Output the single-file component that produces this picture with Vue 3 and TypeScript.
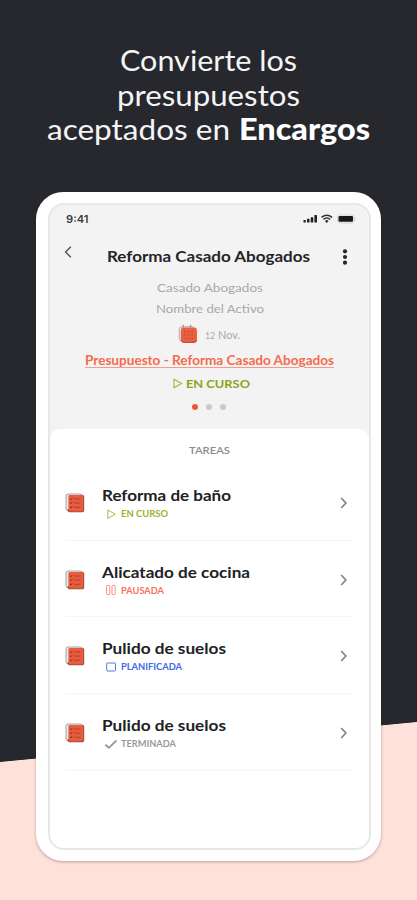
<script setup lang="ts">
type State = 'running' | 'paused' | 'planned' | 'done'

interface Task {
  title: string
  width: number
  state: State
  label: string
  labelWidth: number
}

const tasks: Task[] = [
  { title: 'Reforma de baño', width: 129, state: 'running', label: 'EN CURSO', labelWidth: 47 },
  { title: 'Alicatado de cocina', width: 148, state: 'paused', label: 'PAUSADA', labelWidth: 43 },
  { title: 'Pulido de suelos', width: 124, state: 'planned', label: 'PLANIFICADA', labelWidth: 61 },
  { title: 'Pulido de suelos', width: 124, state: 'done', label: 'TERMINADA', labelWidth: 55 },
]

// Widens the letters of a single line of text so that it fills the given width.
const vFit = {
  mounted(el: HTMLElement, binding: { value: number }) {
    const natural = el.getBoundingClientRect().width
    el.style.width = `${binding.value}px`
    el.style.transform = `scaleX(${binding.value / natural})`
  },
}
</script>

<template>
  <main class="poster">
    <h1 class="headline">
      <span class="line"><span v-fit="177" class="fit">Convierte los</span></span>
      <span class="line"><span v-fit="183" class="fit">presupuestos</span></span>
      <span class="line"><span v-fit="183" class="fit">aceptados en</span><b v-fit="131" class="fit strong">Encargos</b></span>
    </h1>

    <section class="phone">
      <div class="screen">
        <header class="head">
          <div class="status">
            <span v-fit="22.5" class="fit clock">9:41</span>
            <svg class="signals" width="54" height="12" viewBox="0 0 54 12">
              <g fill="#202124">
                <rect x="0.5" y="7" width="2.3" height="2.5" rx=".6" />
                <rect x="4" y="5.8" width="2.5" height="3.7" rx=".6" />
                <rect x="7.7" y="4.2" width="2.6" height="5.3" rx=".6" />
                <rect x="11.4" y="2" width="2.6" height="7.5" rx=".6" />
              </g>
              <g fill="none" stroke="#333436" stroke-width="1.5">
                <path d="M18.5 4.4Q23.8 0 29.1 4.4" />
                <path d="M20.4 6.4Q23.8 3.6 27.2 6.4" />
              </g>
              <path d="M21.9 7.9Q23.8 6.3 25.7 7.9L23.8 9.9Z" fill="#333436" />
              <rect x="34.5" y="2" width="16.5" height="8" rx="2" fill="none" stroke="#ccc" stroke-width=".8" />
              <rect x="35.5" y="3" width="14.5" height="5.8" rx="1" fill="#17181a" />
              <path d="M52 4.6v2.5" stroke="#ccc" />
            </svg>
          </div>
          <div class="bar">
            <svg class="back" width="10" height="14" viewBox="0 0 10 14">
              <path d="M7.8 1.8L2.6 7L7.8 12.2" fill="none" stroke="#4c4d4f" stroke-width="1.3" />
            </svg>
            <h2 v-fit="203" class="fit title">Reforma Casado Abogados</h2>
            <svg class="more" width="6" height="18" viewBox="0 0 6 18" fill="#242527">
              <circle cx="3" cy="3.3" r="2.1" />
              <circle cx="3" cy="9" r="2.1" />
              <circle cx="3" cy="14.7" r="2.1" />
            </svg>
          </div>
          <p class="meta"><span v-fit="106" class="fit">Casado Abogados</span></p>
          <p class="meta"><span v-fit="108" class="fit">Nombre del Activo</span></p>
          <div class="date">
            <svg width="20" height="20" viewBox="0 0 20 20">
              <rect x="1.2" y="2.7" width="15.5" height="14.5" rx="3" fill="#f4f4f4" stroke="#b1aaa8" />
              <path d="M5.3.8v3M12.7.8v3" stroke="#999" stroke-width="1.2" />
              <rect x="2.7" y="3.5" width="16.3" height="15.3" rx="3.2" fill="#ec6041" />
              <path d="M3.5 16.5Q4.2 18.2 6 18.3H16Q18.3 18.1 18.5 16" fill="none" stroke="#b54831" />
              <path d="M6 7.7h10M6 11h10M6 14.3h10" stroke="#b04a34" stroke-width="1.1" stroke-dasharray="1.8 1.8" />
            </svg>
            <span v-fit="35" class="fit day"><small>12</small> Nov.</span>
          </div>
          <p class="link-row"><a v-fit="249" class="fit link">Presupuesto - Reforma Casado Abogados</a></p>
          <div class="current">
            <svg width="10" height="11" viewBox="0 0 10 11">
              <path d="M1 1.3L8.5 5.5L1 9.7Z" fill="none" stroke="#9cb83c" stroke-width="1.1" />
            </svg>
            <span v-fit="64" class="fit">EN CURSO</span>
          </div>
          <div class="dots"><i class="on" /><i /><i /></div>
        </header>

        <div class="sheet">
          <h3 class="section"><span v-fit="41" class="fit">TAREAS</span></h3>
          <ul class="tasks">
            <li v-for="(task, i) in tasks" :key="i" class="task">
              <svg class="book" width="20" height="20" viewBox="0 0 20 20">
                <rect x="1" y="1" width="16" height="16.5" rx="2" fill="#e8e8e8" stroke="#aaa3a0" />
                <path d="M2 17.5L4 19.2H18L19.2 18V3L17.5 1.5" fill="#8d4938" />
                <rect x="3.4" y="2" width="15" height="16.4" rx="1.4" fill="#e95c3e" />
                <path d="M9 6h6.5M9 10h6.5M9 14.2h6.5" stroke="#a8442f" stroke-width="1.1" />
                <path d="M5 5.8l1 1 1.4-2M5 9.8l1 1 1.4-2M5 14l1 1 1.4-2" fill="none" stroke="#8a3222" stroke-width="1" />
              </svg>
              <div class="text">
                <div class="name"><span v-fit="task.width" class="fit">{{ task.title }}</span></div>
                <div class="state" :class="task.state">
                  <svg width="14" height="12" viewBox="0 0 14 12" fill="none" stroke="currentColor">
                    <path v-if="task.state === 'running'" d="M2.8 2L10.3 6.2L2.8 10.4Z" stroke-width=".9" />
                    <g v-else-if="task.state === 'paused'" stroke-width=".8">
                      <rect x="1.6" y="1.4" width="3.2" height="9.2" rx=".8" />
                      <rect x="7" y="1.4" width="3.2" height="9.2" rx=".8" />
                    </g>
                    <rect v-else-if="task.state === 'planned'" x="1.7" y="2" width="8.8" height="8" rx=".6" stroke-width=".9" />
                    <path v-else d="M.4 6.8L3.9 9.8L11.4 2.5" stroke-width="1.8" />
                  </svg>
                  <span v-fit="task.labelWidth" class="fit">{{ task.label }}</span>
                </div>
              </div>
              <svg class="chevron" width="10" height="14" viewBox="0 0 10 14">
                <path d="M2.2 2L6.9 7L2.2 12" fill="none" stroke="#808080" stroke-width="1.6" />
              </svg>
            </li>
          </ul>
        </div>
      </div>
    </section>
  </main>
</template>

<style>
body {
  margin: 0;
}
</style>

<style scoped>
.poster {
  box-sizing: border-box;
  width: 417px;
  height: 900px;
  padding-top: 43px;
  overflow: hidden;
  font-family: Lato, "Open Sans", sans-serif;
  background: linear-gradient(to bottom right, #27282d 0 49.5%, #ffe1db 50.5%) 0 722px / 417px 40px no-repeat,
    linear-gradient(#27282d 0 722px, #ffe1db 722px);
}
h1, h2, h3, p, ul {
  margin: 0;
  padding: 0;
  font-weight: inherit;
}
.fit {
  display: inline-block;
  white-space: nowrap;
  text-align: left;
  transform-origin: 0 50%;
}
.headline {
  height: 149px;
  color: #f5f5f5;
  font-size: 29.5px;
  line-height: 34.5px;
}
.line {
  display: flex;
  justify-content: center;
}
.strong {
  margin-left: 9px;
  color: #fff;
  font-weight: 900;
}
.phone {
  box-sizing: border-box;
  width: 345px;
  height: 669px;
  margin-left: 36px;
  padding: 11px 10px 11px 12px;
  border-radius: 27px;
  background: #fff;
  box-shadow: 0 1px 3px rgba(60, 25, 20, .35);
}
.screen {
  box-sizing: border-box;
  height: 647px;
  overflow: hidden;
  border: 2px solid #e7e7e7;
  border-radius: 16px;
  background: #f3f3f3;
}
.head {
  height: 224px;
}
.status {
  display: flex;
  justify-content: space-between;
  height: 28px;
  padding: 7px 12px 0 16px;
}
.clock {
  margin-top: 1px;
  color: #3d3e40;
  font-family: Inter, sans-serif;
  font-size: 10.5px;
  font-weight: 600;
  line-height: 14px;
}
.signals {
  margin-top: 1px;
}
.bar {
  display: flex;
  height: 37px;
  padding-left: 13px;
}
.back {
  margin-top: 5px;
}
.title {
  margin-left: 34px;
  margin-top: 6px;
  color: #242527;
  font-size: 16px;
  font-weight: 700;
  line-height: 20px;
}
.more {
  margin: 8px 21px 0 auto;
}
.meta {
  height: 21.3px;
  color: #a8a8a8;
  font-size: 12.3px;
  line-height: 22px;
  text-align: center;
}
.date {
  display: flex;
  height: 29px;
  padding-left: 128px;
}
.date svg {
  margin-top: 4px;
}
.day {
  margin-left: 7px;
  color: #a8a8a8;
  font-size: 10.5px;
  line-height: 30px;
}
.day small {
  font-size: 8.5px;
}
.link-row {
  height: 23px;
  text-align: center;
}
.link {
  color: #f36b4f;
  font-size: 12.3px;
  font-weight: 700;
  line-height: 23px;
  text-decoration: underline;
  text-decoration-color: #f79b88;
  text-decoration-thickness: 1px;
  text-underline-offset: 2px;
}
.current {
  display: flex;
  align-items: center;
  height: 23px;
  padding-left: 123px;
  gap: 3px;
  color: #86a517;
  font-size: 12px;
  font-weight: 700;
  line-height: 23px;
}
.dots {
  display: flex;
  padding: 9px 0 0 142px;
  gap: 8px;
}
.dots i {
  width: 6px;
  height: 6px;
  border-radius: 50%;
  background: #c8c8c8;
}
.dots .on {
  background: #ef5837;
}
.sheet {
  height: 419px;
  border-radius: 10px 10px 0 0;
  background: #fff;
}
.section {
  box-sizing: border-box;
  height: 35px;
  padding-top: 12px;
  color: #8c8c8c;
  font-size: 10.3px;
  font-weight: 600;
  line-height: 18px;
  text-align: center;
}
.tasks {
  list-style: none;
}
.task {
  display: flex;
  box-sizing: border-box;
  height: 76.7px;
  margin: 0 16px 0 15px;
  padding-top: 13px;
  border-bottom: 1px solid #f6f6f6;
}
.book {
  margin-top: 16px;
}
.text {
  margin: 8px auto 0 17px;
}
.name {
  height: 22px;
  color: #202124;
  font-size: 15.8px;
  font-weight: 700;
  line-height: 20px;
}
.state {
  display: flex;
  align-items: center;
  height: 13px;
  padding-left: 3px;
  gap: 2px;
  font-size: 8.7px;
  font-weight: 700;
  line-height: 13px;
}
.running {
  color: #9ab52b;
}
.paused {
  color: #fb705b;
}
.planned {
  color: #4169e8;
}
.done {
  color: #999;
}
.chevron {
  margin: 19px 4px 0 0;
}
</style>
